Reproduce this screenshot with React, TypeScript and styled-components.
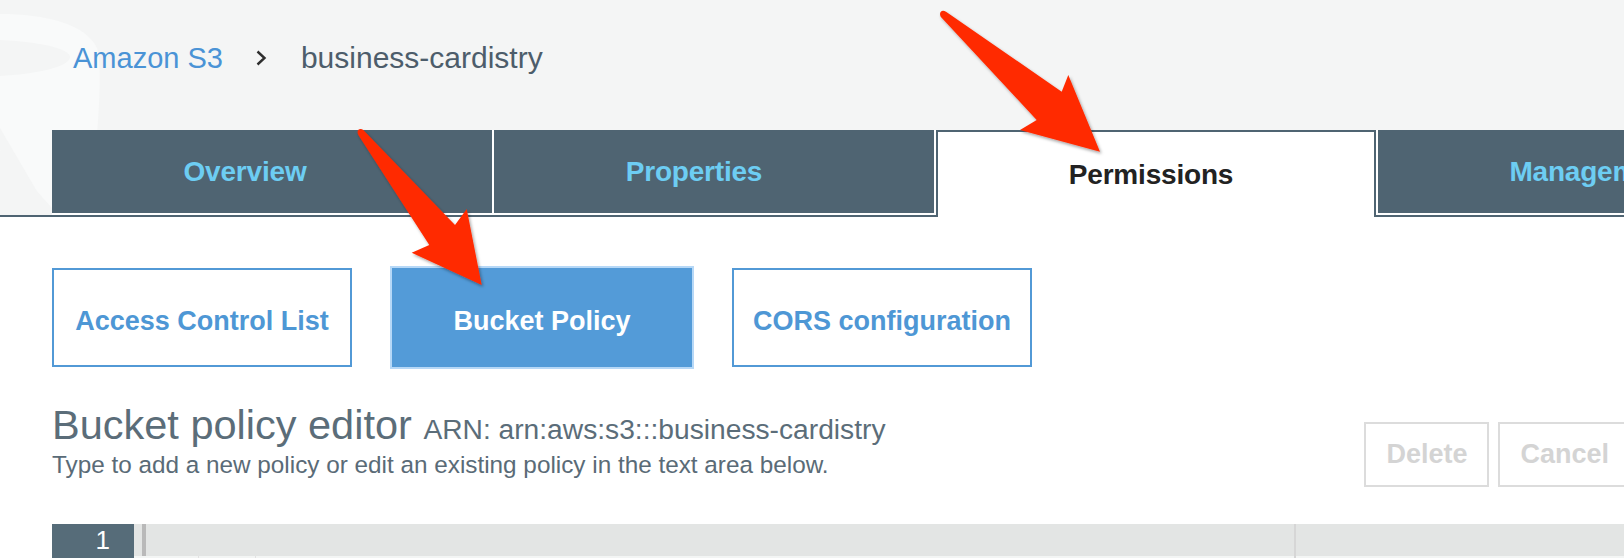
import React from "react";
import styled, { createGlobalStyle } from "styled-components";

const GlobalStyle = createGlobalStyle`
  html, body {
    margin: 0;
    padding: 0;
    background: #ffffff;
    overflow: hidden;
  }
  body {
    font-family: "Liberation Sans", Arial, Helvetica, sans-serif;
  }
  * { box-sizing: border-box; }
`;

const SLATE = "#4f6472";

const Page = styled.div`
  position: relative;
  width: 1624px;
  height: 558px;
  overflow: hidden;
  background: #ffffff;
`;

const Header = styled.header`
  position: relative;
  background: #f4f5f5;
  padding-top: 41px;
`;

const Swoosh = styled.svg`
  position: absolute;
  left: 0;
  top: 0;
  z-index: 0;
`;

const Breadcrumb = styled.nav`
  position: relative;
  z-index: 1;
  display: flex;
  align-items: center;
  height: 34px;
  padding-left: 73px;
  font-size: 30px;
  line-height: 34px;
`;

const Crumb = styled.span<{ $link?: boolean }>`
  color: ${(p) => (p.$link ? "#4a93d6" : "#4d5d6b")};
  font-size: ${(p) => (p.$link ? "29px" : "30px")};
`;

const Separator = styled.svg`
  margin: 0 34px 0 33px;
  flex-shrink: 0;
`;

const TabRow = styled.div`
  position: relative;
  z-index: 1;
  display: flex;
  height: 87px;
  margin-top: 55px;
  padding-left: 52px;
  background: linear-gradient(to top, ${SLATE} 2px, transparent 2px);
`;

const Tabs = styled.div`
  display: flex;
  gap: 2px;
  flex-shrink: 0;
  background: linear-gradient(to top, ${SLATE} 2px, #ffffff 2px);
`;

const Tab = styled.div<{ $active?: boolean; $shift: number }>`
  flex-shrink: 0;
  width: 440px;
  height: ${(p) => (p.$active ? "87px" : "83px")};
  display: flex;
  align-items: center;
  justify-content: center;
  padding-right: ${(p) => p.$shift * 2}px;
  font-size: 28px;
  font-weight: 700;
  letter-spacing: -0.2px;
  color: ${(p) => (p.$active ? "#222222" : "#6dcdf3")};
  background: ${(p) => (p.$active ? "#ffffff" : SLATE)};
  border: ${(p) => (p.$active ? `2px solid ${SLATE}` : "none")};
  border-bottom: none;
`;

const Main = styled.main`
  padding-left: 52px;
`;

const SubTabs = styled.div`
  display: flex;
  gap: 40px;
  margin-top: 51px;
`;

const SubTab = styled.div<{ $active?: boolean }>`
  width: 300px;
  height: 99px;
  display: flex;
  align-items: center;
  justify-content: center;
  padding-top: 7px;
  font-size: 27px;
  font-weight: 700;
  border: 2px solid ${(p) => (p.$active ? "#539bd8" : "#5299d6")};
  background: ${(p) => (p.$active ? "#539bd8" : "#ffffff")};
  color: ${(p) => (p.$active ? "#ffffff" : "#4e97d5")};
  box-shadow: ${(p) => (p.$active ? "0 0 0 2px #b6d8f7" : "none")};
`;

const EditorHeader = styled.div`
  display: flex;
  margin-top: 35px;
`;

const TitleBlock = styled.div`
  flex: 1;
  color: #5b6d79;
`;

const Title = styled.h2`
  margin: 0;
  font-size: 41.5px;
  line-height: 46px;
  font-weight: 400;
  white-space: nowrap;
`;

const Arn = styled.span`
  font-size: 28.2px;
`;

const Subtitle = styled.p`
  margin: -1px 0 0;
  font-size: 24.3px;
  line-height: 28px;
  color: #5a6b77;
  white-space: nowrap;
`;

const Actions = styled.div`
  display: flex;
  gap: 9px;
  margin-top: 20px;
  margin-right: -7px;
  align-self: flex-start;
`;

const ActionButton = styled.div`
  height: 65px;
  padding: 0 20px;
  display: flex;
  align-items: center;
  border: 2px solid #dcdcdc;
  color: #d4d4d4;
  font-size: 27px;
  font-weight: 700;
  background: #ffffff;
`;

const Editor = styled.div`
  display: flex;
  margin-top: 37px;
  height: 60px;
`;

const Gutter = styled.div`
  width: 82px;
  flex-shrink: 0;
  background: #566c79;
  color: #ffffff;
  font-size: 26px;
  line-height: 32px;
  text-align: right;
  padding-right: 24px;
`;

const CodeArea = styled.div`
  position: relative;
  flex: 1;
`;

const CodeLine = styled.div`
  height: 32px;
  background: #e3e5e4;
  padding-left: 8px;
  display: flex;
`;

const Cursor = styled.div`
  width: 4px;
  height: 100%;
  background: #b9b9b9;
`;

const NextLine = styled.div`
  height: 28px;
  background: #f3f5f4;
  padding-left: 64px;
  display: flex;
`;

const Tick = styled.div`
  width: 58px;
  border-left: 1px solid #e2e2e2;
  border-right: 1px solid #e2e2e2;
`;

const PrintMargin = styled.div`
  position: absolute;
  top: 0;
  bottom: 0;
  left: 1160px;
  width: 2px;
  background: #d6d6d6;
`;

const ArrowLayer = styled.svg`
  position: absolute;
  left: 0;
  top: 0;
  z-index: 5;
  pointer-events: none;
`;

const tabs = [
  { label: "Overview", shift: 27 },
  { label: "Properties", shift: 20 },
  { label: "Permissions", shift: 5, active: true },
  { label: "Management", shift: 4 },
];

export default function App() {
  return (
    <>
      <GlobalStyle />
      <Page>
        <Header>
          <Swoosh width="320" height="217" viewBox="0 0 320 217">
            <path
              d="M0,14 C45,14 86,24 97,48 C104,72 96,150 89,217 L60,217 L0,150 Z"
              fill="#f9fafa"
            />
            <path d="M0,40 C45,42 72,50 70,58 C66,68 35,74 0,76 Z" fill="#f4f5f5" />
            <path d="M0,128 L52,217 L38,217 L0,150 Z" fill="#f4f5f5" />
          </Swoosh>
          <Breadcrumb>
            <Crumb $link>Amazon S3</Crumb>
            <Separator width="11" height="16" viewBox="0 0 11 16">
              <polyline
                points="1.5,1.5 8.5,8 1.5,14.5"
                fill="none"
                stroke="#2e2e2e"
                strokeWidth="2.4"
              />
            </Separator>
            <Crumb>business-cardistry</Crumb>
          </Breadcrumb>
          <TabRow>
            <Tabs>
              {tabs.map((t) => (
                <Tab key={t.label} $active={t.active} $shift={t.shift}>
                  {t.label}
                </Tab>
              ))}
            </Tabs>
          </TabRow>
        </Header>
        <Main>
          <SubTabs>
            <SubTab>Access Control List</SubTab>
            <SubTab $active>Bucket Policy</SubTab>
            <SubTab>CORS configuration</SubTab>
          </SubTabs>
          <EditorHeader>
            <TitleBlock>
              <Title>
                Bucket policy editor <Arn>ARN: arn:aws:s3:::business-cardistry</Arn>
              </Title>
              <Subtitle>
                Type to add a new policy or edit an existing policy in the text area below.
              </Subtitle>
            </TitleBlock>
            <Actions>
              <ActionButton>Delete</ActionButton>
              <ActionButton>Cancel</ActionButton>
            </Actions>
          </EditorHeader>
          <Editor>
            <Gutter>1</Gutter>
            <CodeArea>
              <CodeLine>
                <Cursor />
              </CodeLine>
              <NextLine>
                <Tick />
              </NextLine>
              <PrintMargin />
            </CodeArea>
          </Editor>
        </Main>
        <ArrowLayer width="1624" height="558" viewBox="0 0 1624 558">
          <defs>
            <filter id="arrowShadow" x="-20%" y="-20%" width="140%" height="140%">
              <feDropShadow dx="1.5" dy="2" stdDeviation="1.6" floodColor="#000" floodOpacity="0.35" />
            </filter>
          </defs>
          <g fill="#ff2a00" filter="url(#arrowShadow)">
            <path d="M358.3,135 C356,130.5 359.5,127.5 363.3,130 L455,225 L466.7,209 L481.7,285 L411.7,252.7 L429.3,245 Z" />
            <path d="M940.7,16.7 C938.5,12 942,9 946,11.7 L1061.7,91.7 L1068.3,75 L1100,151.7 L1020,130 L1036.7,120 Z" />
          </g>
        </ArrowLayer>
      </Page>
    </>
  );
}
